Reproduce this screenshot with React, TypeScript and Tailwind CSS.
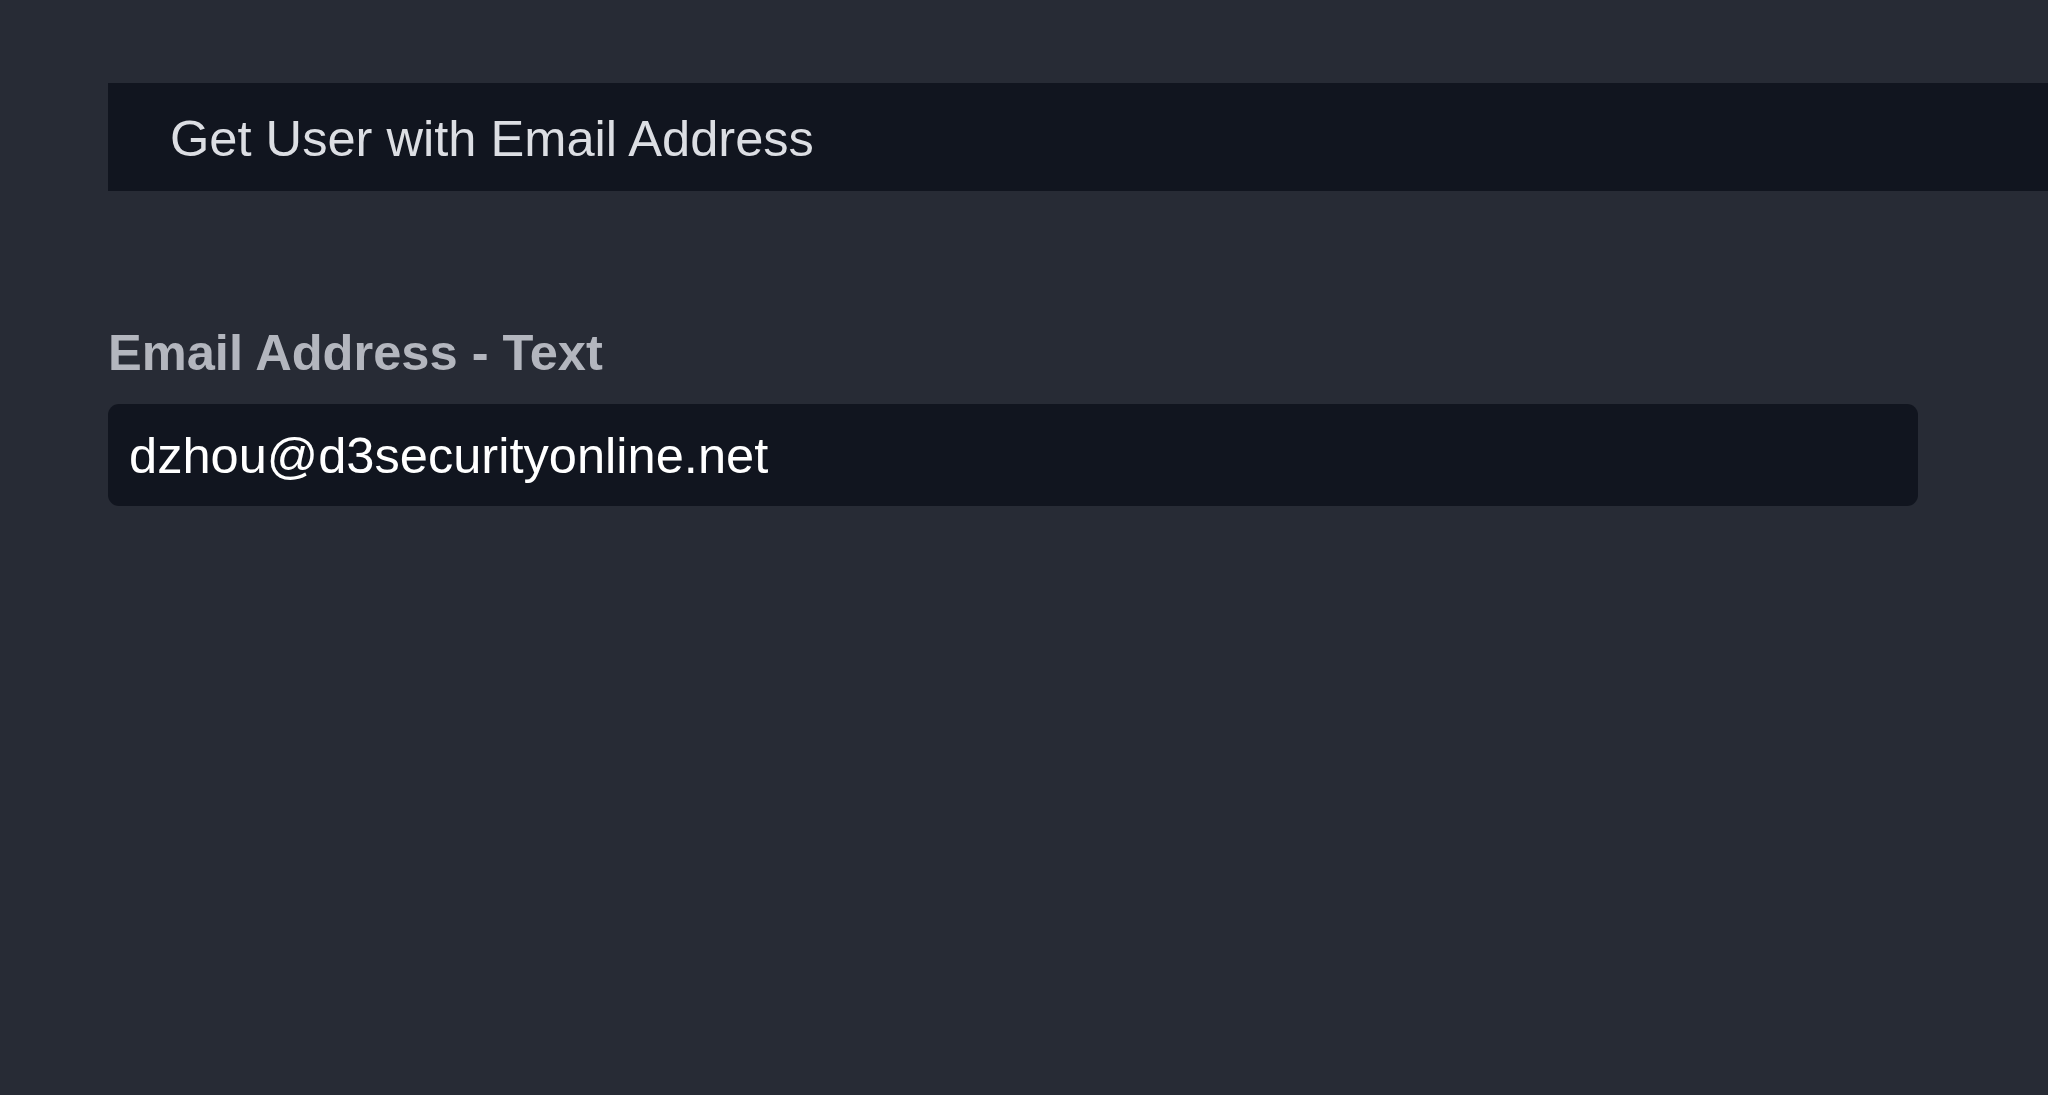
export default function App() {
  return (
    <div
      className="min-h-[1095px] w-full bg-[#272b35] pl-[108px] pt-[83px]"
      style={{ fontFamily: '"Liberation Sans", Arial, sans-serif' }}
    >
      {/* cabeçalho da ação */}
      <div className="flex h-[108px] items-center bg-[#11151f] pl-[62px] pt-[4px]">
        <h1 className="text-[50.6px] font-normal leading-normal text-[#dcdee3]">
          Get User with Email Address
        </h1>
      </div>

      <div className="mt-[124px] w-[1810px]">
        <label className="block text-[50.6px] font-bold leading-normal text-[#b3b6be]">
          Email Address - Text
        </label>
        <div className="mt-[13px] flex h-[102px] items-center rounded-[11px] bg-[#11151f] px-[21px] pt-[3px]">
          <span className="text-[50.6px] leading-normal text-white">
            dzhou@d3securityonline.net
          </span>
        </div>
      </div>
    </div>
  )
}
